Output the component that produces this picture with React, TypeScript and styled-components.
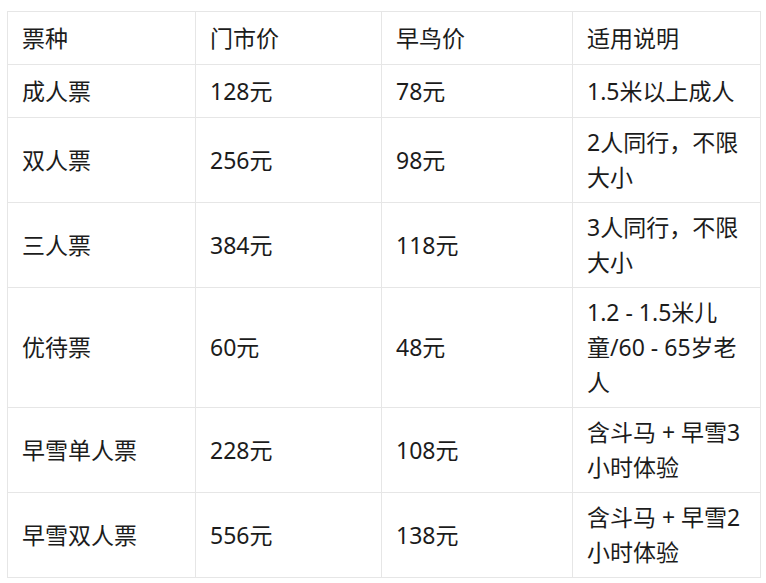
import React from 'react';
import styled, { createGlobalStyle } from 'styled-components';

const GlobalStyle = createGlobalStyle`
  html, body {
    margin: 0;
    padding: 0;
    background: #ffffff;
  }
  body {
    font-family: "Noto Sans", "Noto Sans CJK SC", sans-serif;
    color: #1c1c1c;
  }
`;

const Page = styled.div`
  padding: 11px 6px 10px 7px;
`;

const Table = styled.table`
  width: 753px;
  table-layout: fixed;
  border-collapse: collapse;
  font-size: 23px;
  line-height: 35px;
`;

const Col = styled.col<{ $w: number }>`
  width: ${(p) => p.$w}px;
`;

const Row = styled.tr`
  height: 53px;
`;

const Cell = styled.td`
  border: 1px solid #e6e6e6;
  padding: 7px 18px 7px 14px;
  vertical-align: middle;
  text-align: left;
  font-weight: 400;
  word-break: break-all;
`;

const HeadCell = styled(Cell).attrs({ as: 'th' })``;

const columns = [188, 186, 191, 188];
const headers = ['票种', '门市价', '早鸟价', '适用说明'];

const rows = [
  ['成人票', '128元', '78元', '1.5米以上成人'],
  ['双人票', '256元', '98元', '2人同行，不限大小'],
  ['三人票', '384元', '118元', '3人同行，不限大小'],
  ['优待票', '60元', '48元', '1.2 - 1.5米儿童/60 - 65岁老人'],
  ['早雪单人票', '228元', '108元', '含斗马 + 早雪3小时体验'],
  ['早雪双人票', '556元', '138元', '含斗马 + 早雪2小时体验'],
];

const App = () => {
  return (
    <Page>
      <GlobalStyle />
      <Table>
        <colgroup>
          {columns.map((w, i) => (
            <Col key={i} $w={w} />
          ))}
        </colgroup>
        <thead>
          <Row>
            {headers.map((h) => (
              <HeadCell key={h}>{h}</HeadCell>
            ))}
          </Row>
        </thead>
        <tbody>
          {rows.map((r) => (
            <Row key={r[0]}>
              {r.map((c, i) => (
                <Cell key={i}>{c}</Cell>
              ))}
            </Row>
          ))}
        </tbody>
      </Table>
    </Page>
  );
};

export default App;
